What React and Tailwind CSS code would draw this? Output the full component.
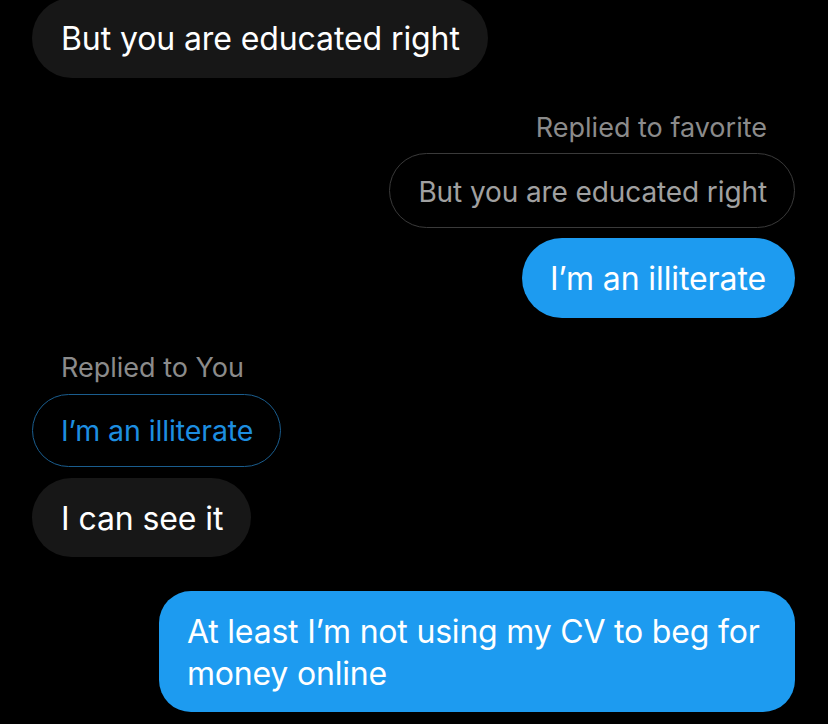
export default function App() {
  const font = { fontFamily: 'Inter, "Noto Sans", sans-serif' };
  return (
    <div className="w-[828px] h-[724px] bg-black overflow-hidden relative" style={font}>
      <div className="flex flex-col">
        <div className="flex justify-start pl-[32px] mt-[-2px]">
          <div className="h-[80px] flex items-center pt-[2px] pl-[29px] pr-[28px] rounded-full bg-[#171717] text-white text-[32px] tracking-[-0.1px]">
            But you are educated right
          </div>
        </div>
        <div className="flex justify-end pr-[61px] mt-[36px] h-[28px] items-center text-[#8b8b8b] text-[27px]">
          Replied to favorite
        </div>
        <div className="flex justify-end pr-[33px] mt-[11px]">
          <div className="h-[75px] flex items-center pt-[2px] pl-[28px] pr-[27px] rounded-full border-[1.5px] border-[#3a3a3a] text-[#a0a0a0] text-[28px] tracking-[-0.1px]">
            But you are educated right
          </div>
        </div>
        <div className="flex justify-end pr-[33px] mt-[10px]">
          <div className="h-[80px] flex items-center pt-[2px] pl-[28px] pr-[29px] rounded-full bg-[#1d9bf0] text-white text-[32px] tracking-[-0.1px]">
            I’m an illiterate
          </div>
        </div>
        <div className="flex justify-start pl-[61px] mt-[36px] h-[28px] items-center text-[#8b8b8b] text-[27px]">
          Replied to You
        </div>
        <div className="flex justify-start pl-[32px] mt-[12px]">
          <div className="h-[73px] flex items-center pt-[2px] pl-[28px] pr-[27px] rounded-full border-[1.5px] border-[#1a5d8e] text-[#1d8ee0] text-[28.5px] tracking-[-0.1px]">
            I’m an illiterate
          </div>
        </div>
        <div className="flex justify-start pl-[32px] mt-[11px]">
          <div className="h-[79px] flex items-center pt-[2px] pl-[29px] pr-[28px] rounded-full bg-[#171717] text-white text-[32px] tracking-[-0.1px]">
            I can see it
          </div>
        </div>
        <div className="flex justify-end pr-[33px] mt-[34px]">
          <div className="w-[636px] h-[121px] flex flex-col justify-center pt-[2px] px-[28px] rounded-[32px] bg-[#1d9bf0] text-white text-[32px] leading-[42px] tracking-[-0.2px]">
            <span>At least I’m not using my CV to beg for</span>
            <span>money online</span>
          </div>
        </div>
      </div>
    </div>
  );
}
